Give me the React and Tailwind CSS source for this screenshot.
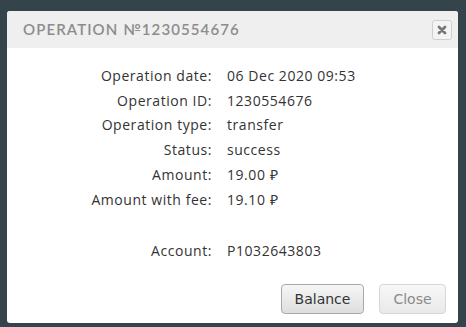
// Operation details dialog

const ROWS = [
  ["Operation date:", "06 Dec 2020 09:53"],
  ["Operation ID:", "1230554676"],
  ["Operation type:", "transfer"],
  ["Status:", "success"],
  ["Amount:", "19.00 ₽"],
  ["Amount with fee:", "19.10 ₽"],
];

const App = () => {
  return (
    <div className="w-[466px] h-[327px] bg-[#35434b] pt-[11px] pl-[7px] overflow-hidden">
      <div className="w-[451px] h-[312px] bg-white rounded-[3px] flex flex-col overflow-hidden">
        {/* header */}
        <div className="h-[37px] bg-[#efefef] flex items-center justify-between pl-[16px] pr-[6px]">
          <h1 className="text-[15px] font-semibold tracking-[1.1px] text-[#8c8c8c] font-['Lato',sans-serif]">
            OPERATION №1230554676
          </h1>
          <button className="w-[20px] h-[20px] rounded-[3px] border border-[#cfcfcf] bg-[#f4f4f4] flex items-center justify-center">
            <svg width="10" height="10" viewBox="0 0 10 10">
              <path d="M2 2 L8 8 M8 2 L2 8" stroke="#777" strokeWidth="2.8" strokeLinecap="round" />
            </svg>
          </button>
        </div>

        {/* body */}
        <div className="flex-1 pt-[15px] font-['Open_Sans',sans-serif] text-[14px] tracking-[0.55px] text-[#333]">
          {ROWS.map(([label, value]) => (
            <div key={label} className="flex h-[24.8px] items-center">
              <span className="w-[205px] text-right">{label}</span>
              <span className="pl-[15px]">{value}</span>
            </div>
          ))}
          <div className="flex h-[24.8px] items-center mt-[26px]">
            <span className="w-[205px] text-right">Account:</span>
            <span className="pl-[15px]">P1032643803</span>
          </div>
        </div>

        {/* footer */}
        <div className="flex justify-end gap-[15px] pr-[12px] pb-[9px] font-['DejaVu_Sans',sans-serif] text-[14px]">
          <button className="w-[83px] h-[30px] rounded-[4px] border border-[#a9a9a9] bg-gradient-to-b from-[#f6f6f6] to-[#dedede] text-[#333]">
            Balance
          </button>
          <button className="w-[67px] h-[30px] rounded-[4px] border border-[#d6d6d6] bg-gradient-to-b from-[#f7f7f7] to-[#e9e9e9] text-[#8a8a8a]">
            Close
          </button>
        </div>
      </div>
    </div>
  );
};

export default App;
